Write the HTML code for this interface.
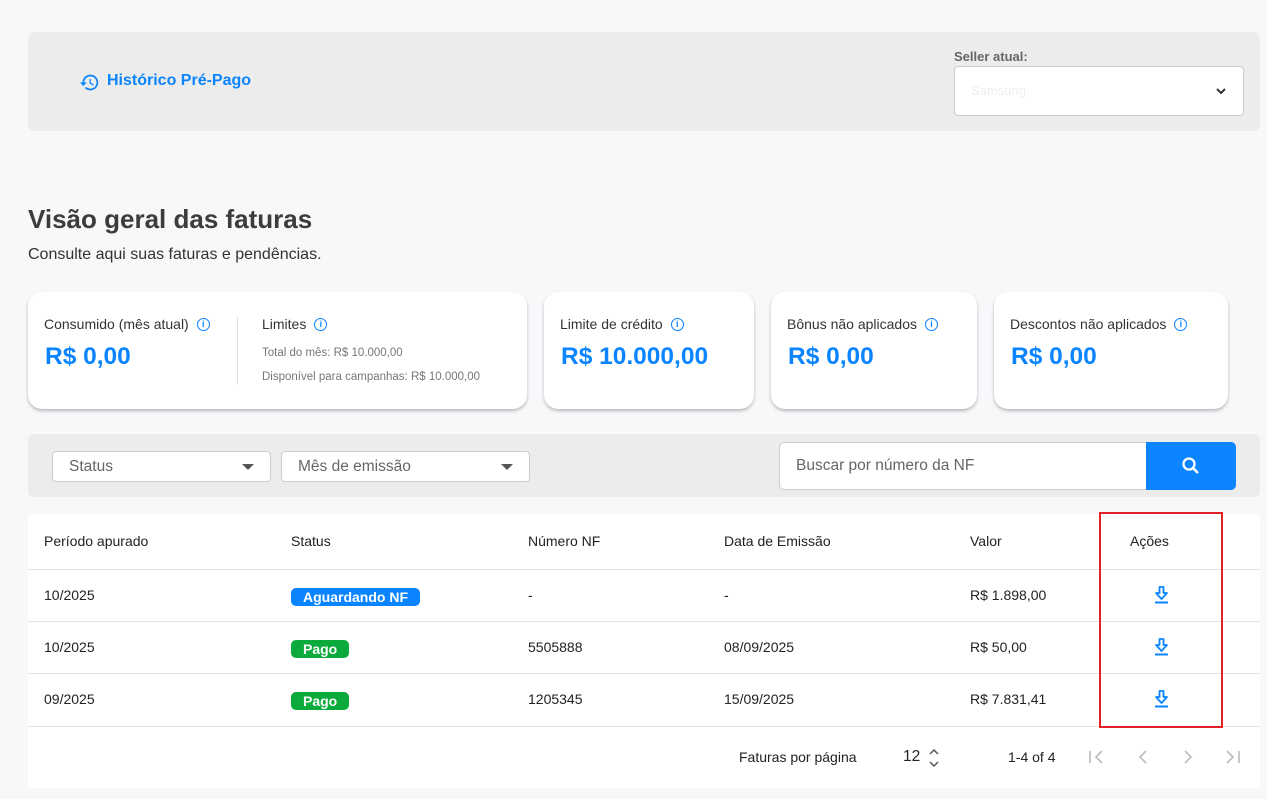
<!DOCTYPE html>
<html><head><meta charset="utf-8"><style>
*{box-sizing:border-box;margin:0;padding:0}
body{width:1267px;height:799px;background:#f8f8fb;font-family:"Liberation Sans",sans-serif;color:#333;position:relative;overflow:hidden}
.abs{position:absolute}
.panel{background:#ececec;border-radius:6px}
.card{background:#fff;border-radius:14px;box-shadow:0 2px 3px rgba(0,0,0,.25)}
.lbl{font-size:14px;color:#333;display:flex;align-items:center;gap:8px}
.big{font-size:24.5px;font-weight:bold;color:#0a84ff}
.info{width:13px;height:13px;border:1.5px solid #0a84ff;border-radius:50%;font-size:9px;color:#0a84ff;text-align:center;line-height:10px;font-weight:bold}
.sel{background:#fff;border:1px solid #ccc;border-radius:4px;font-size:15.5px;color:#666;padding-left:16px;line-height:30px}
.tri{position:absolute;right:16px;top:12px;border-left:6px solid transparent;border-right:6px solid transparent;border-top:6px solid #555}
.td{position:absolute;font-size:14px;color:#222}
.line{position:absolute;left:28px;width:1232px;height:1px;background:#e4e4e4}
.badge{position:absolute;color:#fff;font-size:14px;font-weight:bold;border-radius:5px;height:18px;line-height:18px;padding:0 12px}
.dl{position:absolute;left:1154px}
</style></head><body>
<div class="abs panel" style="left:28px;top:32px;width:1232px;height:99px"></div>
<svg class="abs" style="left:79px;top:72px" width="21" height="21" viewBox="0 0 24 24"><path d="M13 3a9 9 0 0 0-9 9H1l4 4 4-4H6a7 7 0 1 1 2.05 4.95l-1.42 1.42A9 9 0 1 0 13 3zm-1 5v5l4.25 2.52.77-1.28-3.52-2.09V8z" fill="#0a84ff"/></svg>
<div class="abs" style="left:107px;top:72px;font-size:16px;font-weight:bold;color:#0a84ff">Histórico Pré-Pago</div>
<div class="abs" style="left:954px;top:49px;font-size:13px;font-weight:bold;color:#666">Seller atual:</div>
<div class="abs" style="left:954px;top:66px;width:290px;height:50px;background:#fff;border:1px solid #ccc;border-radius:4px">
<span style="position:absolute;left:16px;top:16px;font-size:13px;color:#eee">Samsung</span>
<svg style="position:absolute;right:16px;top:18px" width="12" height="12" viewBox="0 0 12 12"><path d="M2 4l4 4 4-4" stroke="#333" stroke-width="2" fill="none"/></svg></div>

<div class="abs" style="left:28px;top:204px;font-size:26px;font-weight:bold;color:#3c3c3c">Visão geral das faturas</div>
<div class="abs" style="left:28px;top:246px;font-size:16px;color:#333">Consulte aqui suas faturas e pendências.</div>

<div class="abs card" style="left:28px;top:292px;width:499px;height:117px"></div>
<div class="abs lbl" style="left:44px;top:316px">Consumido (mês atual) <span class="info">i</span></div>
<div class="abs big" style="left:45px;top:343px">R$ 0,00</div>
<div class="abs" style="left:237px;top:317px;width:1px;height:68px;background:#e0e0e0"></div>
<div class="abs lbl" style="left:262px;top:316px">Limites <span class="info">i</span></div>
<div class="abs" style="left:262px;top:347px;font-size:11.5px;color:#777">Total do mês: R$ 10.000,00</div>
<div class="abs" style="left:262px;top:371px;font-size:11.5px;color:#777">Disponível para campanhas: R$ 10.000,00</div>

<div class="abs card" style="left:544px;top:292px;width:210px;height:117px"></div>
<div class="abs lbl" style="left:560px;top:316px">Limite de crédito <span class="info">i</span></div>
<div class="abs big" style="left:561px;top:343px">R$ 10.000,00</div>
<div class="abs card" style="left:771px;top:292px;width:206px;height:117px"></div>
<div class="abs lbl" style="left:787px;top:316px">Bônus não aplicados <span class="info">i</span></div>
<div class="abs big" style="left:788px;top:343px">R$ 0,00</div>
<div class="abs card" style="left:994px;top:292px;width:234px;height:117px"></div>
<div class="abs lbl" style="left:1010px;top:316px">Descontos não aplicados <span class="info">i</span></div>
<div class="abs big" style="left:1011px;top:343px">R$ 0,00</div>

<div class="abs panel" style="left:28px;top:434px;width:1232px;height:63px"></div>
<div class="abs sel" style="left:52px;top:451px;width:219px;height:31px">Status<span class="tri"></span></div>
<div class="abs sel" style="left:281px;top:451px;width:249px;height:31px">Mês de emissão<span class="tri"></span></div>
<div class="abs" style="left:779px;top:442px;width:380px;height:48px;background:#fff;border:1px solid #ccc;border-radius:5px;font-size:15.5px;color:#666;padding:14px 16px">Buscar por número da NF</div>
<div class="abs" style="left:1146px;top:442px;width:90px;height:48px;background:#0a84ff;border-radius:0 5px 5px 0"><svg style="position:absolute;left:35px;top:14px" width="20" height="20" viewBox="0 0 20 20"><circle cx="8" cy="8" r="5.5" stroke="#fff" stroke-width="2.3" fill="none"/><path d="M12 12l5 5" stroke="#fff" stroke-width="2.6"/></svg></div>

<div class="abs" style="left:28px;top:514px;width:1232px;height:274px;background:#fff"></div>
<div class="td" style="left:44px;top:533px">Período apurado</div>
<div class="td" style="left:291px;top:533px">Status</div>
<div class="td" style="left:528px;top:533px">Número NF</div>
<div class="td" style="left:724px;top:533px">Data de Emissão</div>
<div class="td" style="left:970px;top:533px">Valor</div>
<div class="td" style="left:1130px;top:533px">Ações</div>
<div class="line" style="top:569px"></div>
<div class="line" style="top:621px"></div>
<div class="line" style="top:673px"></div>
<div class="line" style="top:726px"></div>

<div class="td" style="left:44px;top:587px">10/2025</div>
<div class="badge" style="left:291px;top:588px;background:#0a84ff">Aguardando NF</div>
<div class="td" style="left:528px;top:587px">-</div>
<div class="td" style="left:724px;top:587px">-</div>
<div class="td" style="left:970px;top:587px">R$ 1.898,00</div>

<div class="td" style="left:44px;top:639px">10/2025</div>
<div class="badge" style="left:291px;top:640px;background:#0aaa3c">Pago</div>
<div class="td" style="left:528px;top:639px">5505888</div>
<div class="td" style="left:724px;top:639px">08/09/2025</div>
<div class="td" style="left:970px;top:639px">R$ 50,00</div>

<div class="td" style="left:44px;top:691px">09/2025</div>
<div class="badge" style="left:291px;top:692px;background:#0aaa3c">Pago</div>
<div class="td" style="left:528px;top:691px">1205345</div>
<div class="td" style="left:724px;top:691px">15/09/2025</div>
<div class="td" style="left:970px;top:691px">R$ 7.831,41</div>

<svg class="dl" style="top:586px" width="15" height="18" viewBox="0 0 15 18"><path d="M5.5 1h4v6h3.5l-5.5 6-5.5-6h3.5z" stroke="#0a84ff" stroke-width="1.8" fill="none" stroke-linejoin="round"/><path d="M1 16.5h13" stroke="#0a84ff" stroke-width="2"/></svg>
<svg class="dl" style="top:638px" width="15" height="18" viewBox="0 0 15 18"><path d="M5.5 1h4v6h3.5l-5.5 6-5.5-6h3.5z" stroke="#0a84ff" stroke-width="1.8" fill="none" stroke-linejoin="round"/><path d="M1 16.5h13" stroke="#0a84ff" stroke-width="2"/></svg>
<svg class="dl" style="top:690px" width="15" height="18" viewBox="0 0 15 18"><path d="M5.5 1h4v6h3.5l-5.5 6-5.5-6h3.5z" stroke="#0a84ff" stroke-width="1.8" fill="none" stroke-linejoin="round"/><path d="M1 16.5h13" stroke="#0a84ff" stroke-width="2"/></svg>

<div class="abs" style="left:1099px;top:512px;width:124px;height:216px;border:2px solid #e32129"></div>

<div class="td" style="left:739px;top:749px">Faturas por página</div>
<div class="td" style="left:903px;top:748px;font-size:15.5px">12</div>
<svg class="abs" style="left:927px;top:747px" width="14" height="22" viewBox="0 0 14 22"><path d="M3 7l4-4 4 4M3 15l4 4 4-4" stroke="#555" stroke-width="1.5" fill="none"/></svg>
<div class="td" style="left:1008px;top:749px">1-4 of 4</div>
<svg class="abs" style="left:1088px;top:749px" width="160" height="16" viewBox="0 0 160 16"><g stroke="#bbb" stroke-width="1.6" fill="none"><path d="M2 2v12M14 2l-6 6 6 6"/><path d="M58 2l-6 6 6 6"/><path d="M97 2l6 6-6 6"/><path d="M139 2l6 6-6 6M151 2v12"/></g></svg>
</body></html>
